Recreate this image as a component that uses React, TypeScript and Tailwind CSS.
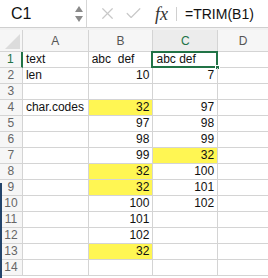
import { X, Check } from 'lucide-react'

type Cell = { v: string; right?: boolean; y?: boolean }

const rows: Cell[][] = [
  [{ v: 'text' }, { v: 'abc  def' }, { v: 'abc def' }],
  [{ v: 'len' }, { v: '10', right: true }, { v: '7', right: true }],
  [{ v: '' }, { v: '' }, { v: '' }],
  [{ v: 'char.codes' }, { v: '32', right: true, y: true }, { v: '97', right: true }],
  [{ v: '' }, { v: '97', right: true }, { v: '98', right: true }],
  [{ v: '' }, { v: '98', right: true }, { v: '99', right: true }],
  [{ v: '' }, { v: '99', right: true }, { v: '32', right: true, y: true }],
  [{ v: '' }, { v: '32', right: true, y: true }, { v: '100', right: true }],
  [{ v: '' }, { v: '32', right: true, y: true }, { v: '101', right: true }],
  [{ v: '' }, { v: '100', right: true }, { v: '102', right: true }],
  [{ v: '' }, { v: '101', right: true }, { v: '' }],
  [{ v: '' }, { v: '102', right: true }, { v: '' }],
  [{ v: '' }, { v: '32', right: true, y: true }, { v: '' }],
  [{ v: '' }, { v: '' }, { v: '' }],
]

const widths = ['w-[66px]', 'w-[65px]', 'w-[65px]']

export default function App() {
  return (
    <div className="relative w-[268px] h-[278px] overflow-hidden bg-white font-['Liberation_Sans',Arial,sans-serif] text-[#111]">
      {/* Formula bar */}
      <div className="flex h-[28px] items-center border-b border-[#cfcfcf]">
        <div className="flex h-full w-[87px] items-center justify-between border-r border-[#d6d6d6] pl-[11px] pr-[3px]">
          <span className="text-[16px] leading-none">C1</span>
          <div className="flex flex-col items-center gap-[4px] text-[#8a8a8a]">
            <svg width="8" height="6" viewBox="0 0 8 6"><path d="M4 0L8 6H0z" fill="currentColor" /></svg>
            <svg width="8" height="6" viewBox="0 0 8 6"><path d="M0 0h8L4 6z" fill="currentColor" /></svg>
          </div>
        </div>
        <div className="flex items-center pl-[11px] text-[#c8c8c8]">
          <X size={19} strokeWidth={1.5} />
          <Check size={19} strokeWidth={1.5} className="ml-[7px]" />
        </div>
        <span className="ml-[12px] font-['Liberation_Serif',serif] text-[18px] italic leading-none text-[#333]">fx</span>
        <div className="ml-[8px] h-[14px] w-px bg-[#d0d0d0]" />
        <span className="ml-[8px] text-[14px] leading-none">=TRIM(B1)</span>
      </div>
      <div className="h-[2px] bg-[#f1f1f1]" />

      {/* Column headers */}
      <div className="flex h-[22px] bg-[#f6f6f6] text-[12px] text-[#555] border-b border-[#d4d4d4]">
        <div className="relative w-[23px] border-r border-[#d4d4d4]">
          <svg className="absolute bottom-[2px] right-[2px]" width="15" height="15" viewBox="0 0 15 15">
            <path d="M15 0V15H0z" fill="#dcdcdc" />
          </svg>
        </div>
        <div className="flex w-[66px] items-center justify-center border-r border-[#d4d4d4]">A</div>
        <div className="flex w-[65px] items-center justify-center border-r border-[#d4d4d4]">B</div>
        <div className="flex w-[65px] items-center justify-center border-r border-[#d4d4d4] bg-[#ececec] text-[#217346]">C</div>
        <div className="flex w-[50px] items-center justify-center">D</div>
      </div>

      {/* Rows */}
      {rows.map((row, i) => (
        <div key={i} className="flex h-[16px] text-[12px] leading-[15px]">
          <div
            className={
              i === 0
                ? 'w-[23px] border-b border-r-2 border-b-[#d4d4d4] border-r-[#217346] bg-[#f6f6f6] text-center text-[#217346]'
                : 'w-[23px] border-b border-r border-[#d4d4d4] bg-[#f6f6f6] text-center text-[#666]'
            }
          >
            {i + 1}
          </div>
          {row.map((c, j) => (
            <div
              key={j}
              className={`relative ${widths[j]} whitespace-pre border-b border-r border-[#d4d4d4] px-[3px] ${c.right ? 'text-right' : ''} ${c.y ? 'bg-[#fff653]' : ''}`}
            >
              {c.v}
              {i === 0 && j === 2 && (
                <div className="absolute -left-[2px] -top-[1px] h-[17px] w-[67px] border-2 border-[#217346]">
                  <div className="absolute -bottom-[4px] -right-[4px] h-[5px] w-[5px] border border-white bg-[#217346]" />
                </div>
              )}
            </div>
          ))}
          <div className="w-[50px] border-b border-[#d4d4d4]" />
        </div>
      ))}

      <div className="absolute bottom-0 left-0 top-[183px] w-[2px] bg-[#23446b]" />
    </div>
  )
}
